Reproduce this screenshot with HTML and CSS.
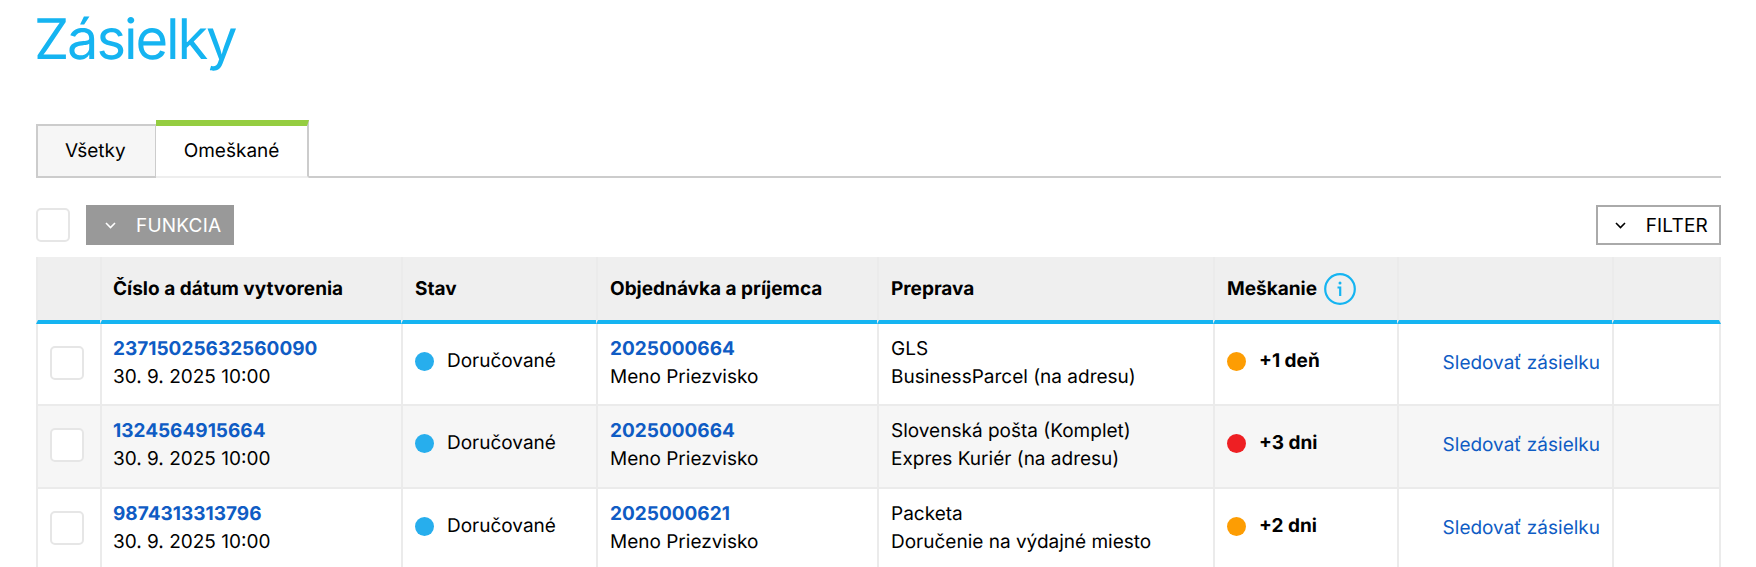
FILE: index.html
```html
<!DOCTYPE html>
<html lang="sk">

<head>
    <meta charset="UTF-8">
    <title>Zásielky</title>
    <link rel="stylesheet" href="styles.css">
</head>

<body>
    <h1 class="page-title">Zásielky</h1>

    <div class="tabs">
        <a class="tab">Všetky</a>
        <a class="tab tab-active">Omeškané</a>
    </div>

    <div class="toolbar">
        <span class="check"></span>
        <button class="btn-function">
            <svg class="chevron" viewBox="0 0 11 7"><path d="M1 1l4.5 4.5L10 1"/></svg>
            FUNKCIA
        </button>
        <button class="btn-filter">
            <svg class="chevron" viewBox="0 0 11 7"><path d="M1 1l4.5 4.5L10 1"/></svg>
            FILTER
        </button>
    </div>

    <table class="orders">
        <thead>
            <tr>
                <th class="col-check"></th>
                <th class="col-number">Číslo a dátum vytvorenia</th>
                <th class="col-state">Stav</th>
                <th class="col-order">Objednávka a príjemca</th>
                <th class="col-carrier">Preprava</th>
                <th class="col-delay">
                    <span class="delay-head">Meškanie
                        <svg class="info" viewBox="0 0 32 32">
                            <circle cx="16" cy="16" r="14.8"/>
                            <circle class="info-dot" cx="16" cy="10" r="1.5"/>
                            <path d="M13.5 14.5H16.2V23"/>
                        </svg>
                    </span>
                </th>
                <th class="col-track"></th>
                <th></th>
            </tr>
        </thead>
        <tbody>
            <tr>
                <td class="cell-check"><span class="check"></span></td>
                <td class="cell-number"><a class="strong-link">23715025632560090</a><br>30. 9. 2025 10:00</td>
                <td><span class="status"><i class="dot dot-blue"></i>Doručované</span></td>
                <td><a class="strong-link">2025000664</a><br>Meno Priezvisko</td>
                <td>GLS<br>BusinessParcel (na adresu)</td>
                <td><span class="status status-delay"><i class="dot dot-orange"></i>+1 deň</span></td>
                <td class="track"><a>Sledovať zásielku</a></td>
                <td></td>
            </tr>
            <tr>
                <td class="cell-check"><span class="check"></span></td>
                <td class="cell-number"><a class="strong-link">1324564915664</a><br>30. 9. 2025 10:00</td>
                <td><span class="status"><i class="dot dot-blue"></i>Doručované</span></td>
                <td><a class="strong-link">2025000664</a><br>Meno Priezvisko</td>
                <td>Slovenská pošta (Komplet)<br>Expres Kuriér (na adresu)</td>
                <td><span class="status status-delay"><i class="dot dot-red"></i>+3 dni</span></td>
                <td class="track"><a>Sledovať zásielku</a></td>
                <td></td>
            </tr>
            <tr>
                <td class="cell-check"><span class="check"></span></td>
                <td class="cell-number"><a class="strong-link">9874313313796</a><br>30. 9. 2025 10:00</td>
                <td><span class="status"><i class="dot dot-blue"></i>Doručované</span></td>
                <td><a class="strong-link">2025000621</a><br>Meno Priezvisko</td>
                <td>Packeta<br>Doručenie na výdajné miesto</td>
                <td><span class="status status-delay"><i class="dot dot-orange"></i>+2 dni</span></td>
                <td class="track"><a>Sledovať zásielku</a></td>
                <td></td>
            </tr>
        </tbody>
    </table>
</body>

</html>
```

FILE: styles.css
```css
html, body {
    height: 567px;
    overflow: hidden;
}

body {
    margin: 0;
    padding: 0 35px 0 36px;
    font-family: Inter, "Liberation Sans", sans-serif;
    font-size: 19px;
    line-height: 28px;
    color: #000;
    background: #fff;
    text-rendering: geometricPrecision;
}

.page-title {
    margin: 0 0 0 -2px;
    height: 120px;
    padding-top: 3px;
    box-sizing: border-box;
    font-size: 56px;
    line-height: 72px;
    font-weight: 400;
    letter-spacing: -2.1px;
    color: #15b4f1;
}

/* tabs */
.tabs {
    display: flex;
    align-items: flex-end;
    height: 58px;
    box-sizing: border-box;
    border-bottom: 2px solid #ccc;
}

.tab {
    height: 54px;
    margin-bottom: -2px;
    padding: 0 29px 0 27px;
    display: flex;
    align-items: center;
    box-sizing: border-box;
    background: #f6f6f6;
    border: 2px solid #ccc;
}

.tab-active {
    height: 58px;
    margin-left: -1px;
    background: #fff;
    border: 0 solid #ccc;
    border-top: 6px solid #95cd41;
    border-right-width: 2px;
    border-bottom: 2px solid #eee;
    padding: 0 28px 0 28px;
}

/* toolbar */
.toolbar {
    display: flex;
    align-items: center;
    height: 40px;
    margin-top: 27px;
    margin-bottom: 12px;
}

.check {
    display: block;
    width: 34px;
    height: 34px;
    box-sizing: border-box;
    background: #fff;
    border: 2px solid #e6e6e6;
    border-radius: 5px;
}

.btn-function,
.btn-filter {
    display: flex;
    align-items: center;
    gap: 20px;
    height: 40px;
    box-sizing: border-box;
    font-family: inherit;
    font-size: 19px;
    letter-spacing: 0.2px;
}

.btn-function {
    margin-left: 16px;
    padding: 0 13px 0 19px;
    color: #fff;
    background: #999;
    border: 0;
}

.btn-filter {
    margin-left: auto;
    padding: 0 11px 0 17px;
    color: #000;
    background: #fff;
    border: 2px solid #aaa;
}

.chevron {
    width: 11px;
    height: 7px;
    fill: none;
    stroke: currentColor;
    stroke-width: 1.6;
}

/* table */
.orders {
    width: 100%;
    border-collapse: separate;
    border-spacing: 0;
    table-layout: fixed;
}

.orders th,
.orders td {
    box-sizing: border-box;
    padding: 0 12px;
    border-left: 2px solid #ebebeb;
}

.orders th:last-child,
.orders td:last-child {
    border-right: 2px solid #ebebeb;
}

.orders th {
    height: 67px;
    text-align: left;
    font-weight: 700;
    background: #efefef;
    border-bottom: 4px solid #15b4f1;
}

.orders td {
    height: 83px;
    padding-bottom: 3px;
    border-bottom: 2px solid #ebebeb;
}

.orders tbody tr:first-child td {
    height: 82px;
    padding-bottom: 2px;
}

.orders tbody tr:nth-child(even) td {
    background: #f6f6f6;
}

.col-check { width: 64px; }
.col-number { width: 301px; }
.col-state { width: 195px; }
.col-order { width: 281px; }
.col-carrier { width: 336px; }
.col-delay { width: 184px; }
.col-track { width: 215px; }

.orders .col-number,
.orders .cell-number {
    padding-left: 11px;
}

.delay-head {
    display: flex;
    align-items: center;
    gap: 7px;
}

.info {
    width: 32px;
    height: 32px;
    fill: none;
    stroke: #15b4f1;
    stroke-width: 2.2;
}

.info-dot {
    fill: #15b4f1;
    stroke: none;
}

.strong-link {
    font-weight: 700;
    color: #0f5cc4;
}

.status {
    display: flex;
    align-items: center;
    gap: 13px;
    margin-bottom: 4px;
}

.status-delay {
    font-weight: 700;
}

.dot {
    width: 19px;
    height: 19px;
    border-radius: 50%;
}

.dot-blue { background: #27aeed; }
.dot-orange { background: #fd9d03; }
.dot-red { background: #ee1f23; }

.orders .track {
    padding: 0 12px 3px 0;
    text-align: right;
    color: #0f5cc4;
}
```
